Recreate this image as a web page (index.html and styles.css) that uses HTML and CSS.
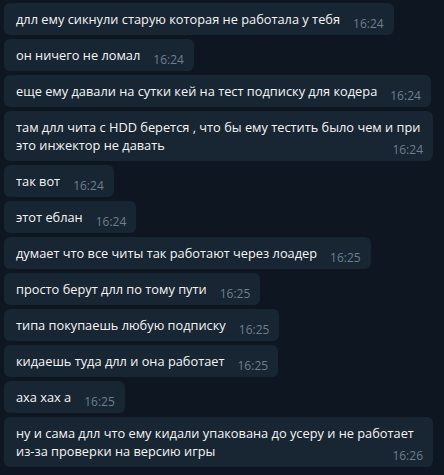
FILE: index.html
```html
<!DOCTYPE html>
<html lang="ru">
<head>
  <meta charset="UTF-8" />
  <title>Чат</title>
  <link rel="stylesheet" href="styles.css">
</head>
<body>
  <div class="history">
    <div class="msg"><span class="msg__text">длл ему сикнули старую которая не работала у тебя</span><span class="msg__time">16:24</span></div>
    <div class="msg"><span class="msg__text">он ничего не ломал</span><span class="msg__time">16:24</span></div>
    <div class="msg"><span class="msg__text">еще ему давали на сутки кей на тест подписку для кодера</span><span class="msg__time">16:24</span></div>
    <div class="msg"><span class="msg__text">там длл чита с HDD берется , что бы ему тестить было чем и при это инжектор не давать</span><span class="msg__time">16:24</span></div>
    <div class="msg"><span class="msg__text">так вот</span><span class="msg__time">16:24</span></div>
    <div class="msg"><span class="msg__text">этот еблан</span><span class="msg__time">16:24</span></div>
    <div class="msg"><span class="msg__text">думает что все читы так работают через лоадер</span><span class="msg__time">16:25</span></div>
    <div class="msg"><span class="msg__text">просто берут длл по тому пути</span><span class="msg__time">16:25</span></div>
    <div class="msg"><span class="msg__text">типа покупаешь любую подписку</span><span class="msg__time">16:25</span></div>
    <div class="msg"><span class="msg__text">кидаешь туда длл и она работает</span><span class="msg__time">16:25</span></div>
    <div class="msg"><span class="msg__text">аха хах а</span><span class="msg__time">16:25</span></div>
    <div class="msg"><span class="msg__text">ну и сама длл что ему кидали упакована до усеру и не работает из-за проверки на версию игры</span><span class="msg__time">16:26</span></div>
  </div>
</body>
</html>
```

FILE: styles.css
```css
body {
  margin: 0;
  background: #0e1621;
  font-family: "Open Sans", "Noto Sans", sans-serif;
  color: #f5f5f5;
}

.history {
  display: flex;
  flex-direction: column;
  align-items: flex-start;
  gap: 4px;
  padding: 3px 4px 8px;
}

.msg {
  box-sizing: border-box;
  max-width: 429px;
  padding: 7px 10px 7px 12px;
  background: #182533;
  border-radius: 6px;
  font-size: 12.8px;
  line-height: 18px;
}

/* time sits on the last line when it fits, at the right edge */
.msg__time {
  float: right;
  margin: 5px 0 -5px 13px;
  font-size: 12px;
  line-height: 18px;
  color: #6d7f8f;
}
```
